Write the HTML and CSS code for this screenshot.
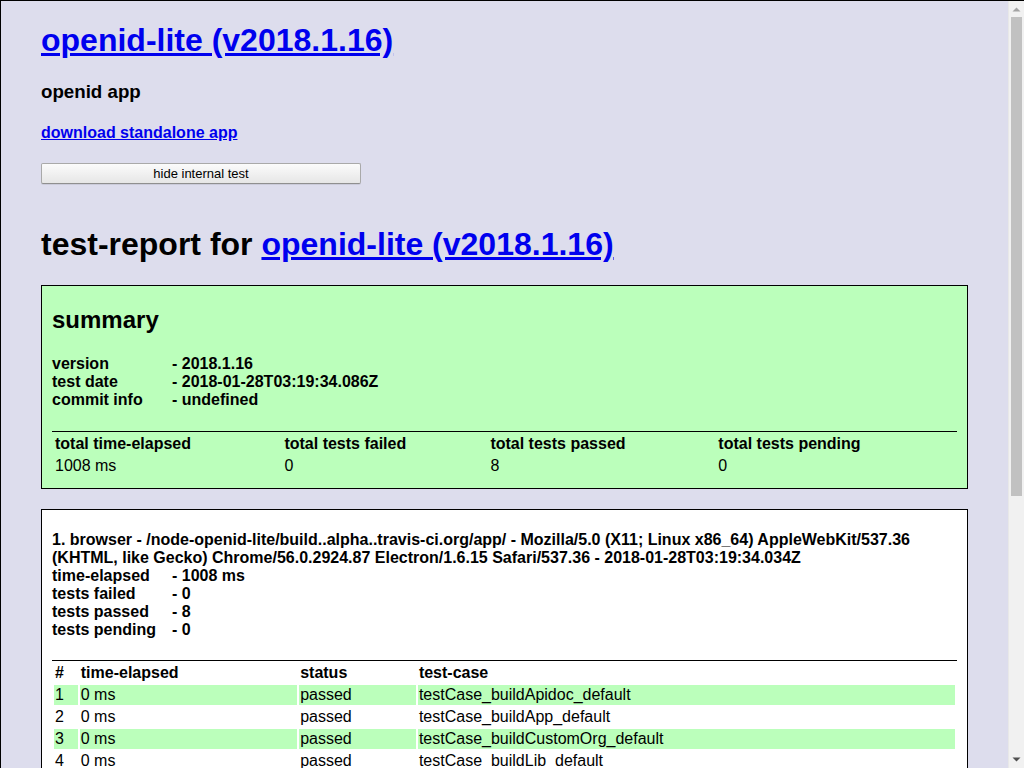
FILE: index.html
```html
<!DOCTYPE html>
<html lang="en">
<head>
<meta charset="utf-8">
<title>openid-lite (v2018.1.16)</title>
<link rel="stylesheet" href="styles.css">
</head>
<body>
<div class="window">
  <div class="viewport">
    <main class="page">
      <h1 class="title"><a href="#">openid-lite (v2018.1.16)</a></h1>
      <h3 class="subtitle">openid app</h3>
      <h4 class="download"><a href="#">download standalone app</a></h4>
      <button class="toggle" type="button">hide internal test</button>
      <div class="report">
        <h1 class="report-title">test-report for <a href="#">openid-lite (v2018.1.16)</a></h1>
        <div class="platform summary">
          <h2>summary</h2>
          <h4 class="info">
            <span class="label">version</span>- 2018.1.16<br>
            <span class="label">test date</span>- 2018-01-28T03:19:34.086Z<br>
            <span class="label">commit info</span>- undefined
          </h4>
          <table class="grid">
            <thead>
              <tr>
                <th>total time-elapsed</th>
                <th>total tests failed</th>
                <th>total tests passed</th>
                <th>total tests pending</th>
              </tr>
            </thead>
            <tbody>
              <tr>
                <td>1008 ms</td>
                <td>0</td>
                <td>8</td>
                <td>0</td>
              </tr>
            </tbody>
          </table>
        </div>
        <div class="platform">
          <h4 class="info">
            1. browser - /node-openid-lite/build..alpha..travis-ci.org/app/ - Mozilla/5.0 (X11; Linux x86_64) AppleWebKit/537.36 (KHTML, like Gecko) Chrome/56.0.2924.87 Electron/1.6.15 Safari/537.36 - 2018-01-28T03:19:34.034Z<br>
            <span class="label">time-elapsed</span>- 1008 ms<br>
            <span class="label">tests failed</span>- 0<br>
            <span class="label">tests passed</span>- 8<br>
            <span class="label">tests pending</span>- 0
          </h4>
          <table class="grid cases">
            <thead>
              <tr>
                <th>#</th>
                <th>time-elapsed</th>
                <th>status</th>
                <th>test-case</th>
              </tr>
            </thead>
            <tbody>
              <tr class="passed"><td>1</td><td>0 ms</td><td>passed</td><td>testCase_buildApidoc_default</td></tr>
              <tr><td>2</td><td>0 ms</td><td>passed</td><td>testCase_buildApp_default</td></tr>
              <tr class="passed"><td>3</td><td>0 ms</td><td>passed</td><td>testCase_buildCustomOrg_default</td></tr>
              <tr><td>4</td><td>0 ms</td><td>passed</td><td>testCase_buildLib_default</td></tr>
              <tr class="passed"><td>5</td><td>0 ms</td><td>passed</td><td>testCase_buildReadme_default</td></tr>
              <tr><td>6</td><td>0 ms</td><td>passed</td><td>testCase_buildTest_default</td></tr>
              <tr class="passed"><td>7</td><td>0 ms</td><td>passed</td><td>testCase_webpage_default</td></tr>
              <tr><td>8</td><td>1008 ms</td><td>passed</td><td>testCase_webpage_error</td></tr>
            </tbody>
          </table>
        </div>
        <div class="footer">[ this document was created with utility2 ]</div>
      </div>
    </main>
  </div>
  <div class="scrollbar" aria-hidden="true">
    <div class="sb-button">
      <svg width="15" height="16" viewBox="0 0 15 16"><polygon points="3.5,10.5 11.5,10.5 7.5,6.5" fill="#a3a3a3"/></svg>
    </div>
    <div class="sb-track"><div class="sb-thumb"></div></div>
    <div class="sb-button">
      <svg width="15" height="16" viewBox="0 0 15 16"><polygon points="3.5,5.5 11.5,5.5 7.5,9.5" fill="#505050"/></svg>
    </div>
  </div>
</div>
</body>
</html>
```

FILE: styles.css
```css
* {
  box-sizing: border-box;
}

html,
body {
  margin: 0;
  padding: 0;
  background: #ffffff;
}

body {
  font-family: "Liberation Sans", Arial, Helvetica, sans-serif;
  color: #000;
}

a {
  color: #0000ee;
}

.window {
  display: flex;
  width: 1024px;
  height: 768px;
  border-top: 1px solid #000;
  border-left: 1px solid #000;
  overflow: hidden;
}

.viewport {
  flex: 1;
  min-width: 0;
  overflow: hidden;
  background: #dddded;
}

.page {
  padding: 0 40px;
  display: flow-root;
}

.title {
  font-size: 32px;
  margin: 21.44px 0;
}

.subtitle {
  font-size: 18.72px;
  margin: 18.72px 0;
}

.download {
  font-size: 16px;
  margin: 21.28px 0;
}

.toggle {
  display: block;
  width: 320px;
  height: 21px;
  margin: 0 0 20px;
  padding: 0 6px;
  font-family: "Liberation Sans", Arial, sans-serif;
  font-size: 13px;
  color: #000;
  background: linear-gradient(#fbfbfb, #e6e6e6);
  border: 1px solid #a9a9a9;
  border-bottom-color: #8f8f8f;
  border-radius: 2px;
  box-shadow: 0 1px 0 rgba(0, 0, 0, 0.08);
}

.report {
  display: flow-root;
}

.report-title {
  font-size: 32px;
  margin: 21.44px 0 22.44px;
}

.platform {
  background: #fff;
  border: 1px solid #000;
  margin-bottom: 20px;
  padding: 0 10px 10px 10px;
}

.platform.summary {
  background: #bbffbb;
}

.platform h2 {
  font-size: 24px;
  margin: 19.92px 0;
}

.info {
  font-size: 16px;
  margin: 21.28px 0;
}

.label {
  display: inline-block;
  width: 120px;
}

.grid {
  width: 100%;
  border-top: 1px solid #000;
  font-size: 16px;
}

.grid th,
.grid td {
  text-align: left;
  padding: 1px;
}

.grid th {
  font-weight: bold;
}

.cases tr.passed td {
  background: #bbffbb;
}

.footer {
  text-align: center;
  margin: 20px 0 200px;
}

.scrollbar {
  flex: none;
  width: 16px;
  display: flex;
  flex-direction: column;
  background: #f1f1f1;
  border-left: 1px solid #e8e8e8;
}

.sb-button {
  flex: none;
  height: 16px;
  display: flex;
  align-items: center;
  justify-content: center;
}

.sb-button svg {
  display: block;
}

.sb-track {
  flex: 1;
  padding: 0 2px;
}

.sb-thumb {
  height: 479px;
  background: #c1c1c1;
}
```
